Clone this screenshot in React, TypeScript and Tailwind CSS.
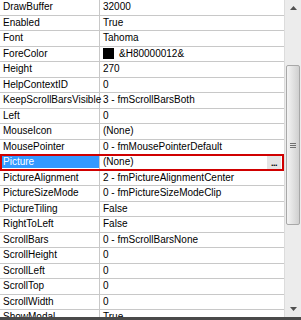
import React from "react";

const rows: [string, string][] = [
  ["DrawBuffer", "32000"],
  ["Enabled", "True"],
  ["Font", "Tahoma"],
  ["ForeColor", "&H80000012&"],
  ["Height", "270"],
  ["HelpContextID", "0"],
  ["KeepScrollBarsVisible", "3 - fmScrollBarsBoth"],
  ["Left", "0"],
  ["MouseIcon", "(None)"],
  ["MousePointer", "0 - fmMousePointerDefault"],
  ["Picture", "(None)"],
  ["PictureAlignment", "2 - fmPictureAlignmentCenter"],
  ["PictureSizeMode", "0 - fmPictureSizeModeClip"],
  ["PictureTiling", "False"],
  ["RightToLeft", "False"],
  ["ScrollBars", "0 - fmScrollBarsNone"],
  ["ScrollHeight", "0"],
  ["ScrollLeft", "0"],
  ["ScrollTop", "0"],
  ["ScrollWidth", "0"],
  ["ShowModal", "True"],
];

export default function App() {
  return (
    <div
      className="w-[301px] h-[320px] overflow-hidden bg-white flex flex-col"
      style={{ fontFamily: '"Liberation Sans", Arial, sans-serif' }}
    >
      <div className="flex h-[317px] overflow-hidden">
        <div className="w-[284px] flex flex-col text-[10px] text-black">
          {rows.map(([name, value]) => {
            const selected = name === "Picture";
            return (
              <div
                key={name}
                className="relative flex h-[15.5px] shrink-0 border-b border-[#c8c8c8]"
              >
                <div className="w-[100px] shrink-0 flex items-center border-r border-[#c8c8c8] pl-[2px]">
                  {selected ? (
                    <div className="w-full h-[12px] bg-[#3399ff] text-white flex items-center pl-[1px] leading-none">
                      {name}
                    </div>
                  ) : (
                    <span className="leading-none pl-[1px]">{name}</span>
                  )}
                </div>
                <div className="flex-1 flex items-center pl-[3px] leading-none whitespace-nowrap">
                  {name === "ForeColor" && (
                    <span className="inline-block w-[11px] h-[11px] bg-black mr-[5px]" />
                  )}
                  <span>{value}</span>
                </div>
                {selected && (
                  <>
                    <div className="absolute right-[3px] top-[1px] w-[14px] h-[14px] bg-[#e4e4e4] flex items-end justify-center pb-[2px]">
                      <span className="text-[9px] leading-none font-bold tracking-[-0.5px]">...</span>
                    </div>
                    <div className="absolute left-0 right-0 top-[-1px] bottom-[-1px] border-2 border-[#d00000] pointer-events-none" />
                  </>
                )}
              </div>
            );
          })}
        </div>
        <div className="w-[17px] h-full bg-[#ececec] border-l border-[#dcdcdc] flex flex-col items-center">
          <div className="h-[16px] w-full flex items-center justify-center">
            <svg width="7" height="4" viewBox="0 0 7 4">
              <polygon points="3.5,0 7,4 0,4" fill="#505050" />
            </svg>
          </div>
          <div className="h-[49px]" />
          <div className="w-[14px] h-[160px] rounded-[2px] border border-[#a8a8a8] bg-gradient-to-r from-[#f4f4f4] via-[#e2e2e2] to-[#d0d0d0] flex flex-col items-center justify-center gap-[1px]">
            <div className="w-[6px] h-px bg-[#707070]" />
            <div className="w-[6px] h-px bg-[#707070]" />
            <div className="w-[6px] h-px bg-[#707070]" />
          </div>
          <div className="flex-1" />
          <div className="h-[16px] w-full flex items-center justify-center">
            <svg width="7" height="4" viewBox="0 0 7 4">
              <polygon points="0,0 7,0 3.5,4" fill="#505050" />
            </svg>
          </div>
        </div>
      </div>
      <div className="h-[3px] bg-[#4a4a4a]" />
    </div>
  );
}
